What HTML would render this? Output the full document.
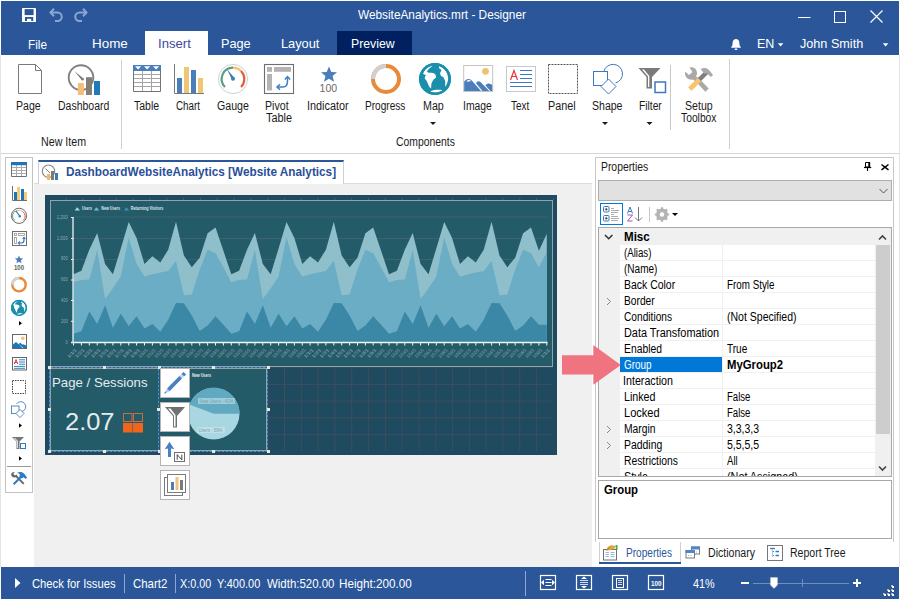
<!DOCTYPE html>
<html><head><meta charset="utf-8">
<style>
*{box-sizing:border-box}
html,body{margin:0;padding:0}
body{width:900px;height:600px;overflow:hidden;position:relative;background:#f3f3f3;font-family:"Liberation Sans",sans-serif;font-size:12px;color:#000}
.a{position:absolute}
.t{position:absolute;white-space:nowrap;line-height:0;transform-origin:0 0}
svg{position:absolute;overflow:visible}
</style></head><body>
<div class="a" style="left:0;top:0;width:900px;height:600px;background:#fdfcf7"></div><div class="a" style="left:1px;top:55px;width:898px;height:512px;background:#fff"></div>
<div class="a" style="left:1px;top:1px;width:898px;height:54px;background:#2b579a"></div>
<div class="a" style="left:1px;top:153px;width:898px;height:1px;background:#d5d5d5"></div>
<svg style="left:0;top:0" width="100" height="30">
<rect x="22" y="8" width="14" height="14" rx="1" fill="#fff"/>
<rect x="24.6" y="9.1" width="9" height="6" fill="#2b579a"/>
<rect x="25" y="17" width="8.2" height="5" fill="#2b579a"/>
<rect x="27" y="18.8" width="4.2" height="3.2" fill="#fff"/>
<rect x="22" y="21" width="14" height="1" fill="#fff"/>
<g fill="none" stroke="#8aa6d2" stroke-width="2">
<path d="M50.5 12.5 H57.5 A4.2 4.2 0 0 1 57.5 21 H55"/>
<path d="M54 8.8 L50.5 12.5 L54 16.2"/>
<path d="M86.5 12.5 H79.5 A4.2 4.2 0 0 0 79.5 21 H82"/>
<path d="M83 8.8 L86.5 12.5 L83 16.2"/>
</g>
</svg>
<svg style="left:0;top:0" width="900" height="30">
<rect x="798" y="17" width="12.5" height="1" fill="#fff"/>
<rect x="834.5" y="11.5" width="11" height="11" fill="none" stroke="#fff" stroke-width="1"/>
<path d="M870.5 10.5 L882.5 22.5 M882.5 10.5 L870.5 22.5" stroke="#fff" stroke-width="1.2"/>
</svg>
<div class="a" style="left:145px;top:31px;width:63px;height:24px;background:#fff"></div>
<div class="a" style="left:337px;top:31px;width:75px;height:24px;background:#002060"></div>
<svg style="left:0;top:0" width="900" height="60">
<path d="M736 39 C732.5 39 732.5 43 732.5 45 L731 47.8 H741 L739.5 45 C739.5 43 739.5 39 736 39Z" fill="#fff"/>
<rect x="734.6" y="48.6" width="2.8" height="1.4" rx="0.7" fill="#fff"/>
<path d="M777.8 43.2 H783.4 L780.6 46.4Z" fill="#fff"/>
<path d="M882.8 43.2 H888.4 L885.6 46.4Z" fill="#fff"/>
</svg>
<div class="a" style="left:121px;top:60px;width:1px;height:89px;background:#d0d0d0"></div>
<div class="a" style="left:729px;top:59px;width:1px;height:90px;background:#d0d0d0"></div>
<div class="a" style="left:670px;top:65px;width:1px;height:65px;background:#c8c8c8"></div>
<svg style="left:0;top:0" width="900" height="160">
<path d="M430 122 H436 L433 125Z" fill="#1a1a1a"/>
<path d="M602 122 H608 L605 125Z" fill="#1a1a1a"/>
<path d="M646.5 122 H652.5 L649.5 125Z" fill="#1a1a1a"/>
</svg>
<svg style="left:0;top:0" width="900" height="160">
<!-- page -->
<path d="M18.5 64.5 H35.5 L41.5 70.5 V93.5 H18.5Z M35.5 64.5 V70.5 H41.5" fill="#fff" stroke="#7a7a7a" stroke-width="1"/>
<!-- dashboard -->
<circle cx="81" cy="77.6" r="12.3" fill="none" stroke="#808080" stroke-width="1.9"/>
<path d="M74.2 71 L83.6 78.4 L82 80.2Z" fill="#7a7a7a"/>
<circle cx="82.6" cy="79.2" r="1.2" fill="#7a7a7a"/>
<rect x="77.9" y="83" width="6" height="12" fill="#f5bd78"/>
<rect x="86" y="77.2" width="6" height="17.8" fill="#857e77"/>
<rect x="94" y="81" width="6" height="14" fill="#1f7ab5"/>
<!-- table -->
<rect x="133" y="65" width="28" height="6" fill="#4a7ebb"/>
<path d="M135 66.2 H141.2 L138.1 69.6Z M144 66.2 H150.2 L147.1 69.6Z M153 66.2 H159.2 L156.1 69.6Z" fill="#fff"/>
<path d="M142.5 71 V91.5 M151.5 71 V91.5 M133.5 74.5 H160.5 M133.5 78.5 H160.5 M133.5 82.5 H160.5 M133.5 86.5 H160.5" fill="none" stroke="#a4a4a4" stroke-width="1"/><path d="M133.5 71 V91.5 H160.5 V71" fill="none" stroke="#747474" stroke-width="1"/>
<!-- chart -->
<path d="M174.5 64 V93.5 H204" fill="none" stroke="#777" stroke-width="1"/>
<rect x="177" y="78" width="5" height="15" fill="#4a7ebb"/>
<rect x="184" y="67" width="5" height="26" fill="#eec677"/>
<rect x="191" y="70" width="5" height="23" fill="#4a7ebb"/>
<rect x="198" y="78" width="5" height="15" fill="#eec677"/>
<!-- gauge -->
<circle cx="233" cy="79" r="14.6" fill="#fff" stroke="#d0d0d0" stroke-width="1"/>
<path d="M225 87 A11.3 11.3 0 0 1 233 67.7" fill="none" stroke="#5a9e7f" stroke-width="2.2"/>
<path d="M233 67.7 A11.3 11.3 0 0 1 241 71" fill="none" stroke="#f0c36c" stroke-width="2.2"/>
<path d="M241 71 A11.3 11.3 0 0 1 241 87" fill="none" stroke="#e05b3a" stroke-width="2.2"/>
<path d="M226.8 69 L234.2 77.6 L231.9 79.4Z" fill="#3d7bc0"/>
<circle cx="233" cy="78.8" r="2" fill="#3d7bc0"/>
<!-- pivot -->
<rect x="264.5" y="64.5" width="29" height="29" fill="#fff" stroke="#6e6e6e" stroke-width="1.1"/>
<rect x="267" y="67" width="5" height="4.8" fill="#b3b3b3"/>
<rect x="274" y="67" width="17" height="4.8" fill="#b3b3b3"/>
<rect x="267" y="74" width="5" height="16.5" fill="#b3b3b3"/>
<path d="M277.5 87 H283 C286.5 87 287.5 84 287.5 81 V77" fill="none" stroke="#3d7cc9" stroke-width="1.5"/>
<path d="M280 84.2 L277 87 L280 89.8 M284.8 79.5 L287.5 76.6 L290.2 79.5" fill="none" stroke="#3d7cc9" stroke-width="1.5"/>
<!-- indicator -->
<path d="M329 66.5 L331.3 71.9 L337 72.3 L332.6 76 L334 81.8 L329 78.7 L324 81.8 L325.4 76 L321 72.3 L326.7 71.9Z" fill="#4a7ebb"/>
<!-- progress -->
<circle cx="386" cy="79" r="13" fill="none" stroke="#e8893b" stroke-width="4"/>
<path d="M373 79 A13 13 0 0 1 386 66" fill="none" stroke="#d0d0d0" stroke-width="4"/>
<!-- globe -->
<circle cx="435" cy="79" r="15.9" fill="#1a8eab"/>
<path d="M432 65.5 A13.6 13.6 0 0 0 423 73.9 C424.2 74.2 425.2 74.5 426 75.1 C425.3 76.2 424.6 77.3 424.8 78.4 C425.4 79.3 426 80 426.6 80.8 C427.5 82.7 428.2 84.5 429 86.2 C429.6 87.2 430.4 88 431.1 88.6 C431.3 87 431.2 85.3 431.4 83.8 C432 82.2 432.7 80.8 433.5 79.6 C434.4 78.7 435.5 78 436.2 77.2 C436 76 435.6 74.8 435 73.9 C434 73.3 433 72.9 432 72.7 C430.6 72.5 429.2 72.6 427.8 72.4 C427.4 72 427 71.6 426.9 71.2 C427.6 70.4 428.3 69.6 429 68.8 C430.2 67.8 431.4 66.8 432.6 65.8Z" fill="#fff"/>
<path d="M438.9 66.1 A13.6 13.6 0 0 1 448.3 78.4 C448 80.8 447.3 83 446.4 85 C446 85.6 445.6 86.2 445.2 86.8 C445.2 84.8 445.3 82.8 445.2 80.8 C444.6 79.6 444 78.4 443.4 77.2 C442.6 76.8 441.8 76.4 441 76 C440.5 75 440.2 74 440.1 73 C440.5 72 441.1 71 441.6 70 C440.8 69.4 440 68.8 439.2 68.2 C439 67.5 438.9 66.8 438.9 66.1Z" fill="#fff"/>
<ellipse cx="436.5" cy="91.1" rx="5.8" ry="1.3" transform="rotate(-6 436.5 91.1)" fill="#fff"/>
<circle cx="435" cy="79" r="14.8" fill="none" stroke="#1a8eab" stroke-width="2.4"/>
<!-- image -->
<rect x="463.7" y="65.5" width="29" height="26" fill="#fff" stroke="#c4c4c4" stroke-width="1"/>
<circle cx="485.5" cy="71.3" r="3.4" fill="#ecc46f"/>
<path d="M464.2 91 V81.5 C466 79.5 467.5 79 468.8 79 C470 79 471 79.7 472 80.8 L481 91Z" fill="#4a7ebb"/>
<path d="M476 83.2 C476.5 82 477.5 81.2 478.5 81.2 C479.5 81.2 480.3 81.8 481 82.5 L489.3 91 H482.4Z" fill="#4a7ebb"/>
<path d="M485.5 85.5 C486.2 84.2 487.3 83.5 488.3 83.5 C489.5 83.5 491 84 492.2 85 V91 H490.4Z" fill="#4a7ebb"/>
<path d="M466 81.6 L467.6 80.2 L469.6 79.8 L471 80.9 L470.2 81.6 L469.2 81.1 L468.2 82 L467.1 81.3Z" fill="#fff"/>
<!-- text -->
<rect x="506.5" y="66.5" width="29" height="25" fill="#fff" stroke="#c8c8c8" stroke-width="1"/>
<path d="M510.5 80 L514 70.5 L517.5 80 M511.8 76.5 H516.2" fill="none" stroke="#e8383b" stroke-width="1.2"/>
<path d="M520 70.5 H532 M520 74.5 H532 M520 78.5 H532 M510 82.5 H532 M510 86.5 H532" stroke="#3c78c0" stroke-width="1"/>
<!-- panel -->
<rect x="548.5" y="64.5" width="29" height="29" fill="none" stroke="#555" stroke-width="1" stroke-dasharray="2 1"/>
<!-- shape -->
<path d="M603.8 71.5 A9.5 9.5 0 1 1 615.5 83" fill="none" stroke="#3e78c0" stroke-width="1"/>
<rect x="593.5" y="71.5" width="14" height="14" fill="#fff" stroke="#3e78c0" stroke-width="1"/>
<path d="M608.5 79 L616 86.5 L608.5 94 L601 86.5Z" fill="#fff" stroke="#3e78c0" stroke-width="1"/>
<!-- filter -->
<path d="M638.5 68 H660.5 L652 77 V88.5 H646.5 V77Z" fill="#7a7a7a"/>
<path d="M642 69.5 L648 76.5 V87 H649.3 V76 L644 69.5Z" fill="#fff"/>
<rect x="655" y="82" width="10.5" height="10.5" fill="#fff" stroke="#3e78c0" stroke-width="1.5"/>
<!-- tools -->
<path d="M697.5 80 L705.5 88.5" stroke="#a9a9a9" stroke-width="4.5" stroke-linecap="square"/>
<path d="M689.5 67.5 C693.5 66.5 697 69 697 73 C697 74.5 696.5 75.5 696 76.5 L699 79.5 L696 82 L693 79.5 C689 80.5 685 77.5 685 73.5 C685 72.8 685.2 72.3 685.4 71.8 L689 75 L692.5 72 Z" fill="#a9a9a9"/>
<path d="M698 81 L707 72" stroke="#7f7f7f" stroke-width="4.5"/>
<path d="M689.8 89.2 L699.5 79.5" stroke="#f9c46b" stroke-width="4.8"/>
<path d="M700.5 69.5 C703 67.5 706 67.5 709 70 L713 75 L711 77 L707 73.5 L704 73.5 C703 71.5 702 70.5 700.5 69.5Z" fill="#a9a9a9"/>
</svg>
<div class="a" style="left:0;top:55px;width:1px;height:512px;background:#e4e4e4"></div><div class="a" style="left:899px;top:55px;width:1px;height:512px;background:#e4e4e4"></div>
<div class="a" style="left:5px;top:157px;width:28px;height:336px;border:1px solid #c2c2c2;background:#fff"></div>
<div class="a" style="left:7px;top:466px;width:24px;height:1px;background:#9a9a9a"></div>
<svg style="left:0;top:0" width="40" height="500">
<!-- table -->
<rect x="11" y="162" width="16" height="3.2" fill="#1b75bb"/>
<path d="M11.5 167.5 H26.5 M11.5 170.5 H26.5 M11.5 173.5 H26.5 M16.5 165 V176.5 M21.5 165 V176.5" fill="none" stroke="#ababab" stroke-width="1"/><path d="M11.5 165 V176.5 H26.5 V165" fill="none" stroke="#707070" stroke-width="1"/>
<!-- chart -->
<path d="M12.5 186 V200.5 H27" fill="none" stroke="#6e6e6e" stroke-width="1"/>
<rect x="14" y="192" width="3" height="8" fill="#1b75bb"/>
<rect x="17" y="187" width="3" height="13" fill="#f9c97a"/>
<rect x="21" y="189" width="3" height="11" fill="#1b75bb"/>
<rect x="24" y="192" width="3" height="8" fill="#f9c97a"/>
<!-- gauge -->
<circle cx="19" cy="215.8" r="7.6" fill="none" stroke="#6a6a6a" stroke-width="1"/>
<path d="M14.8 220.5 A5.6 5.6 0 0 1 17.5 210.4" fill="none" stroke="#5b9e80" stroke-width="1"/>
<path d="M17.5 210.4 A5.6 5.6 0 0 1 22.6 211.5" fill="none" stroke="#f0c36c" stroke-width="1"/>
<path d="M22.6 211.5 A5.6 5.6 0 0 1 23.2 220.5" fill="none" stroke="#e05b3a" stroke-width="1"/>
<path d="M16 211 L20 216.5" stroke="#2d7bc4" stroke-width="1.2"/>
<circle cx="19.8" cy="216.2" r="1.2" fill="#2d7bc4"/>
<!-- pivot -->
<rect x="12.5" y="231.5" width="14" height="14" fill="#fff" stroke="#6e6e6e" stroke-width="1"/>
<rect x="14.5" y="233.5" width="2" height="2" fill="none" stroke="#999" stroke-width="0.8"/>
<rect x="18.5" y="233.5" width="6" height="2" fill="none" stroke="#999" stroke-width="0.8"/>
<rect x="14.5" y="237.5" width="2" height="6" fill="none" stroke="#999" stroke-width="0.8"/>
<path d="M18.5 243 H21.5 C23 243 24 242 24 240 V237.5" fill="none" stroke="#2d7bc4" stroke-width="1.2"/>
<path d="M20 241.5 L18.3 243 L20 244.5 M22.5 239 L24 237.3 L25.5 239" fill="none" stroke="#2d7bc4" stroke-width="1.1"/>
<!-- star -->
<path d="M19 255.5 L20.2 258.3 L23.2 258.5 L20.9 260.4 L21.6 263.3 L19 261.7 L16.4 263.3 L17.1 260.4 L14.8 258.5 L17.8 258.3Z" fill="#4a7ebb"/>
<!-- progress -->
<circle cx="19" cy="284.7" r="6.7" fill="none" stroke="#e8893b" stroke-width="2.4"/>
<path d="M12.3 284.7 A6.7 6.7 0 0 1 19 278" fill="none" stroke="#d4d4d4" stroke-width="2.4"/>
<!-- globe -->
<g transform="translate(19 307.9) scale(0.503) translate(-435 -79)"><circle cx="435" cy="79" r="15.9" fill="#1a8eab"/>
<path d="M432 65.5 A13.6 13.6 0 0 0 423 73.9 C424.2 74.2 425.2 74.5 426 75.1 C425.3 76.2 424.6 77.3 424.8 78.4 C425.4 79.3 426 80 426.6 80.8 C427.5 82.7 428.2 84.5 429 86.2 C429.6 87.2 430.4 88 431.1 88.6 C431.3 87 431.2 85.3 431.4 83.8 C432 82.2 432.7 80.8 433.5 79.6 C434.4 78.7 435.5 78 436.2 77.2 C436 76 435.6 74.8 435 73.9 C434 73.3 433 72.9 432 72.7 C430.6 72.5 429.2 72.6 427.8 72.4 C427.4 72 427 71.6 426.9 71.2 C427.6 70.4 428.3 69.6 429 68.8 C430.2 67.8 431.4 66.8 432.6 65.8Z" fill="#fff"/>
<path d="M438.9 66.1 A13.6 13.6 0 0 1 448.3 78.4 C448 80.8 447.3 83 446.4 85 C446 85.6 445.6 86.2 445.2 86.8 C445.2 84.8 445.3 82.8 445.2 80.8 C444.6 79.6 444 78.4 443.4 77.2 C442.6 76.8 441.8 76.4 441 76 C440.5 75 440.2 74 440.1 73 C440.5 72 441.1 71 441.6 70 C440.8 69.4 440 68.8 439.2 68.2 C439 67.5 438.9 66.8 438.9 66.1Z" fill="#fff"/>
<ellipse cx="436.5" cy="91.1" rx="5.8" ry="1.3" transform="rotate(-6 436.5 91.1)" fill="#fff"/>
<circle cx="435" cy="79" r="14.8" fill="none" stroke="#1a8eab" stroke-width="2.4"/>
</g>
<!-- arrows -->
<path d="M19 321 L22 323.3 L19 325.6Z M19 423.2 L22 425.5 L19 427.8Z M19 456.2 L22 458.5 L19 460.8Z" fill="#000"/>
<!-- image -->
<rect x="12.5" y="334.5" width="14" height="14" fill="#fff" stroke="#666" stroke-width="1"/>
<circle cx="22.8" cy="338.2" r="1.8" fill="#f5c06e"/>
<path d="M13 348 V344.5 L16 342 L20 345.5 L22.5 348Z M18.5 344 L20.5 342.8 L25.5 348 H23.5Z M22 345 L23.5 344.3 L26 345.5 V348 H25Z" fill="#1b75bb"/>
<!-- text -->
<rect x="12.5" y="357.5" width="14" height="12.5" fill="#fff" stroke="#666" stroke-width="1"/>
<path d="M14.3 364 L16 359.5 L17.7 364 M14.9 362.5 H17.1" fill="none" stroke="#e8383b" stroke-width="1"/>
<path d="M19 359.8 H25 M19 362 H25 M19 364.2 H25 M14 366.4 H25 M14 368.3 H25" stroke="#1b75bb" stroke-width="0.9"/>
<!-- panel -->
<rect x="12.5" y="380.5" width="13" height="13" fill="none" stroke="#444" stroke-width="1" stroke-dasharray="1.5 1"/>
<!-- shape -->
<path d="M16.5 404 A5 5 0 1 1 22 411.5" fill="none" stroke="#4a7ebb" stroke-width="0.9"/>
<rect x="11.5" y="406" width="7.5" height="7.5" fill="#fff" stroke="#4a7ebb" stroke-width="0.9"/>
<path d="M20 409.5 L24 413.5 L20 417.5 L16 413.5Z" fill="#fff" stroke="#4a7ebb" stroke-width="0.9"/>
<!-- filter -->
<path d="M12 437 H24 L19.5 441.5 V449 H16.5 V441.5Z" fill="#777"/>
<path d="M14 438 L17.3 441.5 V448 H18 V441 L15 438Z" fill="#fff"/>
<rect x="20.5" y="443.5" width="5" height="5" fill="#fff" stroke="#2d7bc4" stroke-width="1"/>
<!-- tools -->
<path d="M15.5 475.5 L23.8 483.8" stroke="#666" stroke-width="1.8"/>
<path d="M11.2 474.2 C11.5 472.5 13.2 471.6 14.8 472 L13.4 473.6 L14.2 475 L15.8 475.6 L17.2 474.2 C17.4 476 16 477.6 14.2 477.4 C12.4 477.2 11 476 11.2 474.2Z" fill="#666"/>
<path d="M13.6 484.2 L21.8 476" stroke="#2d7bc4" stroke-width="2"/>
<path d="M17.2 472.8 C19.5 471.5 22.5 471.8 24.3 473.8 L27 477.6 L25.8 479 L23.6 477.2 L21.6 478.6 L19.2 476.2 L20 474.6 C19.2 473.8 18.3 473.3 17.2 472.8Z" fill="#2d7bc4"/>
</svg>
<svg style="left:0;top:0" width="40" height="300"><text x="14" y="269.8" font-size="7.6" font-weight="bold" fill="#5e5e5e" textLength="10" lengthAdjust="spacingAndGlyphs" font-family="Liberation Sans">100</text></svg>
<div class="a" style="left:34px;top:183px;width:558px;height:384px;background:#f0f0f0;border-top:1px solid #dcdcdc"></div>
<div class="a" style="left:38px;top:160px;width:306px;height:24px;background:#fff;border-left:1px solid #d0d0d0;border-right:1px solid #d0d0d0;border-top:2px solid #2b579a"></div>
<svg style="left:0;top:0" width="70" height="190">
<circle cx="48.5" cy="171.2" r="6.2" fill="none" stroke="#858585" stroke-width="1.1"/>
<path d="M45.5 168.5 L50 173" stroke="#6d6d6d" stroke-width="0.9"/>
<rect x="47" y="174" width="3" height="6" fill="#eeba6c"/>
<rect x="51" y="171" width="3" height="9" fill="#7e7a76"/>
<rect x="55" y="173" width="3" height="7" fill="#3f7ab8"/>
</svg>
<div class="a" style="left:45px;top:195px;width:512px;height:260px;background:#1f4a5f"></div>
<svg style="left:0;top:0" width="600" height="470"><path d="M66.0 200.5 V451.5 M82.8 200.5 V451.5 M99.6 200.5 V451.5 M116.4 200.5 V451.5 M133.2 200.5 V451.5 M150.0 200.5 V451.5 M166.8 200.5 V451.5 M183.6 200.5 V451.5 M200.4 200.5 V451.5 M217.3 200.5 V451.5 M234.1 200.5 V451.5 M250.9 200.5 V451.5 M267.7 200.5 V451.5 M284.5 200.5 V451.5 M301.3 200.5 V451.5 M318.1 200.5 V451.5 M334.9 200.5 V451.5 M351.7 200.5 V451.5 M368.6 200.5 V451.5 M385.4 200.5 V451.5 M402.2 200.5 V451.5 M419.0 200.5 V451.5 M435.8 200.5 V451.5 M452.6 200.5 V451.5 M469.4 200.5 V451.5 M486.2 200.5 V451.5 M503.0 200.5 V451.5 M519.8 200.5 V451.5 M536.6 200.5 V451.5 M50.5 201.0 H552.5 M50.5 217.7 H552.5 M50.5 234.4 H552.5 M50.5 251.0 H552.5 M50.5 267.7 H552.5 M50.5 284.4 H552.5 M50.5 301.0 H552.5 M50.5 317.7 H552.5 M50.5 334.4 H552.5 M50.5 351.1 H552.5 M50.5 367.7 H552.5 M50.5 384.4 H552.5 M50.5 401.1 H552.5 M50.5 417.7 H552.5 M50.5 434.4 H552.5" stroke="#3b4f5e" stroke-width="1"/></svg>
<div class="a" style="left:50px;top:200px;width:503px;height:167px;background:#245b69;border:1px solid #8fa3ab"></div>
<svg style="left:0;top:0" width="600" height="470"><path d="M66.0 198.5 V199.5 M82.8 198.5 V199.5 M99.6 198.5 V199.5 M116.4 198.5 V199.5 M133.2 198.5 V199.5 M150.0 198.5 V199.5 M166.8 198.5 V199.5 M183.6 198.5 V199.5 M200.4 198.5 V199.5 M217.3 198.5 V199.5 M234.1 198.5 V199.5 M250.9 198.5 V199.5 M267.7 198.5 V199.5 M284.5 198.5 V199.5 M301.3 198.5 V199.5 M318.1 198.5 V199.5 M334.9 198.5 V199.5 M351.7 198.5 V199.5 M368.6 198.5 V199.5 M385.4 198.5 V199.5 M402.2 198.5 V199.5 M419.0 198.5 V199.5 M435.8 198.5 V199.5 M452.6 198.5 V199.5 M469.4 198.5 V199.5 M486.2 198.5 V199.5 M503.0 198.5 V199.5 M519.8 198.5 V199.5 M536.6 198.5 V199.5 M553.5 198.5 V199.5" stroke="#7a6a6a" stroke-width="1.2"/></svg>
<svg style="left:0;top:0" width="600" height="470"><path d="M74 217 H547" stroke="#3d6270" stroke-width="1"/><path d="M74 238.5 H547" stroke="#3d6270" stroke-width="1"/><path d="M74 259.5 H547" stroke="#3d6270" stroke-width="1"/><path d="M74 280 H547" stroke="#3d6270" stroke-width="1"/><path d="M74 300.5 H547" stroke="#3d6270" stroke-width="1"/><path d="M74 321.3 H547" stroke="#3d6270" stroke-width="1"/><path d="M73.5 342 L73.5 274.2 L81.4 270.7 L89.3 249.7 L97.2 232.9 L105.1 264.1 L112.9 274.2 L120.8 248.5 L128.7 222.1 L136.6 238.0 L144.5 264.1 L152.4 256.2 L160.3 262.5 L168.2 249.7 L176.0 221.7 L183.9 255.5 L191.8 267.2 L199.7 257.8 L207.6 233.3 L215.5 227.5 L223.4 250.8 L231.3 274.2 L239.1 270.7 L247.0 249.7 L254.9 232.9 L262.8 264.1 L270.7 274.2 L278.6 248.5 L286.5 222.1 L294.4 238.0 L302.3 264.1 L310.1 256.2 L318.0 262.5 L325.9 249.7 L333.8 221.7 L341.7 255.5 L349.6 267.2 L357.5 257.8 L365.4 233.3 L373.2 227.5 L381.1 250.8 L389.0 274.2 L396.9 270.7 L404.8 249.7 L412.7 232.9 L420.6 264.1 L428.5 274.2 L436.3 248.5 L444.2 222.1 L452.1 238.0 L460.0 264.1 L467.9 256.2 L475.8 262.5 L483.7 249.7 L491.6 221.7 L499.5 255.5 L507.3 267.2 L515.2 257.8 L523.1 233.3 L531.0 227.5 L538.9 250.8 L546.8 233.8 L546.8 342Z" fill="#8fbfcb"/><path d="M73.5 342 L73.5 282.3 L81.4 280.0 L89.3 279.5 L97.2 250.1 L105.1 299.1 L112.9 288.2 L120.8 276.5 L128.7 237.5 L136.6 264.1 L144.5 276.5 L152.4 274.2 L160.3 272.5 L168.2 271.1 L176.0 260.9 L183.9 295.2 L191.8 294.5 L199.7 269.5 L207.6 249.7 L215.5 253.2 L223.4 267.2 L231.3 282.3 L239.1 280.0 L247.0 279.5 L254.9 250.1 L262.8 299.1 L270.7 288.2 L278.6 276.5 L286.5 237.5 L294.4 264.1 L302.3 276.5 L310.1 274.2 L318.0 272.5 L325.9 271.1 L333.8 260.9 L341.7 295.2 L349.6 294.5 L357.5 269.5 L365.4 249.7 L373.2 253.2 L381.1 267.2 L389.0 282.3 L396.9 280.0 L404.8 279.5 L412.7 250.1 L420.6 299.1 L428.5 288.2 L436.3 276.5 L444.2 237.5 L452.1 264.1 L460.0 276.5 L467.9 274.2 L475.8 272.5 L483.7 271.1 L491.6 260.9 L499.5 295.2 L507.3 294.5 L515.2 269.5 L523.1 249.7 L531.0 253.2 L538.9 267.2 L546.8 252.0 L546.8 342Z" fill="#6aadc4"/><path d="M73.5 342 L73.5 333.7 L81.4 331.3 L89.3 311.5 L97.2 323.9 L105.1 305.2 L112.9 327.8 L120.8 313.8 L128.7 326.2 L136.6 316.2 L144.5 328.5 L152.4 323.9 L160.3 331.8 L168.2 319.7 L176.0 302.9 L183.9 303.3 L191.8 315.5 L199.7 330.9 L207.6 325.5 L215.5 316.2 L223.4 324.8 L231.3 333.7 L239.1 331.3 L247.0 311.5 L254.9 323.9 L262.8 305.2 L270.7 327.8 L278.6 313.8 L286.5 326.2 L294.4 316.2 L302.3 328.5 L310.1 323.9 L318.0 331.8 L325.9 319.7 L333.8 302.9 L341.7 303.3 L349.6 315.5 L357.5 330.9 L365.4 325.5 L373.2 316.2 L381.1 324.8 L389.0 333.7 L396.9 331.3 L404.8 311.5 L412.7 323.9 L420.6 305.2 L428.5 327.8 L436.3 313.8 L444.2 326.2 L452.1 316.2 L460.0 328.5 L467.9 323.9 L475.8 331.8 L483.7 319.7 L491.6 302.9 L499.5 303.3 L507.3 315.5 L515.2 330.9 L523.1 325.5 L531.0 316.2 L538.9 324.8 L546.8 324.8 L546.8 342Z" fill="#3a87a6"/><path d="M73 217 V343" fill="none" stroke="#eef3f4" stroke-width="1.3"/><path d="M71 342.5 H547.5" fill="none" stroke="#eef3f4" stroke-width="1.6"/><path d="M73.5 342 V345.5 M81.4 342 V345.5 M89.3 342 V345.5 M97.2 342 V345.5 M105.1 342 V345.5 M112.9 342 V345.5 M120.8 342 V345.5 M128.7 342 V345.5 M136.6 342 V345.5 M144.5 342 V345.5 M152.4 342 V345.5 M160.3 342 V345.5 M168.2 342 V345.5 M176.0 342 V345.5 M183.9 342 V345.5 M191.8 342 V345.5 M199.7 342 V345.5 M207.6 342 V345.5 M215.5 342 V345.5 M223.4 342 V345.5 M231.3 342 V345.5 M239.1 342 V345.5 M247.0 342 V345.5 M254.9 342 V345.5 M262.8 342 V345.5 M270.7 342 V345.5 M278.6 342 V345.5 M286.5 342 V345.5 M294.4 342 V345.5 M302.3 342 V345.5 M310.1 342 V345.5 M318.0 342 V345.5 M325.9 342 V345.5 M333.8 342 V345.5 M341.7 342 V345.5 M349.6 342 V345.5 M357.5 342 V345.5 M365.4 342 V345.5 M373.2 342 V345.5 M381.1 342 V345.5 M389.0 342 V345.5 M396.9 342 V345.5 M404.8 342 V345.5 M412.7 342 V345.5 M420.6 342 V345.5 M428.5 342 V345.5 M436.3 342 V345.5 M444.2 342 V345.5 M452.1 342 V345.5 M460.0 342 V345.5 M467.9 342 V345.5 M475.8 342 V345.5 M483.7 342 V345.5 M491.6 342 V345.5 M499.5 342 V345.5 M507.3 342 V345.5 M515.2 342 V345.5 M523.1 342 V345.5 M531.0 342 V345.5 M538.9 342 V345.5 M546.8 342 V345.5" stroke="#eef3f4" stroke-width="1"/><path d="M71 217.5 H73.5 M71 238.5 H73.5 M71 259.5 H73.5 M71 280 H73.5 M71 300.5 H73.5 M71 321.3 H73.5" stroke="#eef3f4" stroke-width="1"/><text x="0" y="0" transform="translate(77.0 350.5) rotate(-45)" text-anchor="end" font-size="4.6" fill="#95adb4" textLength="11" lengthAdjust="spacingAndGlyphs" font-family="Liberation Sans">1/1/1</text><text x="0" y="0" transform="translate(84.9 350.5) rotate(-45)" text-anchor="end" font-size="4.6" fill="#95adb4" textLength="11" lengthAdjust="spacingAndGlyphs" font-family="Liberation Sans">1/2/1</text><text x="0" y="0" transform="translate(92.8 350.5) rotate(-45)" text-anchor="end" font-size="4.6" fill="#95adb4" textLength="11" lengthAdjust="spacingAndGlyphs" font-family="Liberation Sans">1/3/1</text><text x="0" y="0" transform="translate(100.7 350.5) rotate(-45)" text-anchor="end" font-size="4.6" fill="#95adb4" textLength="11" lengthAdjust="spacingAndGlyphs" font-family="Liberation Sans">1/4/1</text><text x="0" y="0" transform="translate(108.6 350.5) rotate(-45)" text-anchor="end" font-size="4.6" fill="#95adb4" textLength="11" lengthAdjust="spacingAndGlyphs" font-family="Liberation Sans">1/5/1</text><text x="0" y="0" transform="translate(116.4 350.5) rotate(-45)" text-anchor="end" font-size="4.6" fill="#95adb4" textLength="11" lengthAdjust="spacingAndGlyphs" font-family="Liberation Sans">1/6/1</text><text x="0" y="0" transform="translate(124.3 350.5) rotate(-45)" text-anchor="end" font-size="4.6" fill="#95adb4" textLength="11" lengthAdjust="spacingAndGlyphs" font-family="Liberation Sans">1/7/1</text><text x="0" y="0" transform="translate(132.2 350.5) rotate(-45)" text-anchor="end" font-size="4.6" fill="#95adb4" textLength="11" lengthAdjust="spacingAndGlyphs" font-family="Liberation Sans">1/8/1</text><text x="0" y="0" transform="translate(140.1 350.5) rotate(-45)" text-anchor="end" font-size="4.6" fill="#95adb4" textLength="11" lengthAdjust="spacingAndGlyphs" font-family="Liberation Sans">1/9/1</text><text x="0" y="0" transform="translate(148.0 350.5) rotate(-45)" text-anchor="end" font-size="4.6" fill="#95adb4" textLength="11" lengthAdjust="spacingAndGlyphs" font-family="Liberation Sans">1/10/1</text><text x="0" y="0" transform="translate(155.9 350.5) rotate(-45)" text-anchor="end" font-size="4.6" fill="#95adb4" textLength="11" lengthAdjust="spacingAndGlyphs" font-family="Liberation Sans">1/11/1</text><text x="0" y="0" transform="translate(163.8 350.5) rotate(-45)" text-anchor="end" font-size="4.6" fill="#95adb4" textLength="11" lengthAdjust="spacingAndGlyphs" font-family="Liberation Sans">1/12/1</text><text x="0" y="0" transform="translate(171.7 350.5) rotate(-45)" text-anchor="end" font-size="4.6" fill="#95adb4" textLength="11" lengthAdjust="spacingAndGlyphs" font-family="Liberation Sans">1/13/1</text><text x="0" y="0" transform="translate(179.5 350.5) rotate(-45)" text-anchor="end" font-size="4.6" fill="#95adb4" textLength="11" lengthAdjust="spacingAndGlyphs" font-family="Liberation Sans">1/14/1</text><text x="0" y="0" transform="translate(187.4 350.5) rotate(-45)" text-anchor="end" font-size="4.6" fill="#95adb4" textLength="11" lengthAdjust="spacingAndGlyphs" font-family="Liberation Sans">1/15/1</text><text x="0" y="0" transform="translate(195.3 350.5) rotate(-45)" text-anchor="end" font-size="4.6" fill="#95adb4" textLength="11" lengthAdjust="spacingAndGlyphs" font-family="Liberation Sans">1/16/1</text><text x="0" y="0" transform="translate(203.2 350.5) rotate(-45)" text-anchor="end" font-size="4.6" fill="#95adb4" textLength="11" lengthAdjust="spacingAndGlyphs" font-family="Liberation Sans">1/17/1</text><text x="0" y="0" transform="translate(211.1 350.5) rotate(-45)" text-anchor="end" font-size="4.6" fill="#95adb4" textLength="11" lengthAdjust="spacingAndGlyphs" font-family="Liberation Sans">1/18/1</text><text x="0" y="0" transform="translate(219.0 350.5) rotate(-45)" text-anchor="end" font-size="4.6" fill="#95adb4" textLength="11" lengthAdjust="spacingAndGlyphs" font-family="Liberation Sans">1/19/1</text><text x="0" y="0" transform="translate(226.9 350.5) rotate(-45)" text-anchor="end" font-size="4.6" fill="#95adb4" textLength="11" lengthAdjust="spacingAndGlyphs" font-family="Liberation Sans">1/20/1</text><text x="0" y="0" transform="translate(234.8 350.5) rotate(-45)" text-anchor="end" font-size="4.6" fill="#95adb4" textLength="11" lengthAdjust="spacingAndGlyphs" font-family="Liberation Sans">1/21/1</text><text x="0" y="0" transform="translate(242.6 350.5) rotate(-45)" text-anchor="end" font-size="4.6" fill="#95adb4" textLength="11" lengthAdjust="spacingAndGlyphs" font-family="Liberation Sans">1/22/1</text><text x="0" y="0" transform="translate(250.5 350.5) rotate(-45)" text-anchor="end" font-size="4.6" fill="#95adb4" textLength="11" lengthAdjust="spacingAndGlyphs" font-family="Liberation Sans">1/23/1</text><text x="0" y="0" transform="translate(258.4 350.5) rotate(-45)" text-anchor="end" font-size="4.6" fill="#95adb4" textLength="11" lengthAdjust="spacingAndGlyphs" font-family="Liberation Sans">1/24/1</text><text x="0" y="0" transform="translate(266.3 350.5) rotate(-45)" text-anchor="end" font-size="4.6" fill="#95adb4" textLength="11" lengthAdjust="spacingAndGlyphs" font-family="Liberation Sans">1/25/1</text><text x="0" y="0" transform="translate(274.2 350.5) rotate(-45)" text-anchor="end" font-size="4.6" fill="#95adb4" textLength="11" lengthAdjust="spacingAndGlyphs" font-family="Liberation Sans">1/26/1</text><text x="0" y="0" transform="translate(282.1 350.5) rotate(-45)" text-anchor="end" font-size="4.6" fill="#95adb4" textLength="11" lengthAdjust="spacingAndGlyphs" font-family="Liberation Sans">1/27/1</text><text x="0" y="0" transform="translate(290.0 350.5) rotate(-45)" text-anchor="end" font-size="4.6" fill="#95adb4" textLength="11" lengthAdjust="spacingAndGlyphs" font-family="Liberation Sans">1/28/1</text><text x="0" y="0" transform="translate(297.9 350.5) rotate(-45)" text-anchor="end" font-size="4.6" fill="#95adb4" textLength="11" lengthAdjust="spacingAndGlyphs" font-family="Liberation Sans">1/29/1</text><text x="0" y="0" transform="translate(305.8 350.5) rotate(-45)" text-anchor="end" font-size="4.6" fill="#95adb4" textLength="11" lengthAdjust="spacingAndGlyphs" font-family="Liberation Sans">1/30/1</text><text x="0" y="0" transform="translate(313.6 350.5) rotate(-45)" text-anchor="end" font-size="4.6" fill="#95adb4" textLength="11" lengthAdjust="spacingAndGlyphs" font-family="Liberation Sans">1/1/1</text><text x="0" y="0" transform="translate(321.5 350.5) rotate(-45)" text-anchor="end" font-size="4.6" fill="#95adb4" textLength="11" lengthAdjust="spacingAndGlyphs" font-family="Liberation Sans">1/2/1</text><text x="0" y="0" transform="translate(329.4 350.5) rotate(-45)" text-anchor="end" font-size="4.6" fill="#95adb4" textLength="11" lengthAdjust="spacingAndGlyphs" font-family="Liberation Sans">1/3/1</text><text x="0" y="0" transform="translate(337.3 350.5) rotate(-45)" text-anchor="end" font-size="4.6" fill="#95adb4" textLength="11" lengthAdjust="spacingAndGlyphs" font-family="Liberation Sans">1/4/1</text><text x="0" y="0" transform="translate(345.2 350.5) rotate(-45)" text-anchor="end" font-size="4.6" fill="#95adb4" textLength="11" lengthAdjust="spacingAndGlyphs" font-family="Liberation Sans">1/5/1</text><text x="0" y="0" transform="translate(353.1 350.5) rotate(-45)" text-anchor="end" font-size="4.6" fill="#95adb4" textLength="11" lengthAdjust="spacingAndGlyphs" font-family="Liberation Sans">1/6/1</text><text x="0" y="0" transform="translate(361.0 350.5) rotate(-45)" text-anchor="end" font-size="4.6" fill="#95adb4" textLength="11" lengthAdjust="spacingAndGlyphs" font-family="Liberation Sans">1/7/1</text><text x="0" y="0" transform="translate(368.9 350.5) rotate(-45)" text-anchor="end" font-size="4.6" fill="#95adb4" textLength="11" lengthAdjust="spacingAndGlyphs" font-family="Liberation Sans">1/8/1</text><text x="0" y="0" transform="translate(376.7 350.5) rotate(-45)" text-anchor="end" font-size="4.6" fill="#95adb4" textLength="11" lengthAdjust="spacingAndGlyphs" font-family="Liberation Sans">1/9/1</text><text x="0" y="0" transform="translate(384.6 350.5) rotate(-45)" text-anchor="end" font-size="4.6" fill="#95adb4" textLength="11" lengthAdjust="spacingAndGlyphs" font-family="Liberation Sans">1/10/1</text><text x="0" y="0" transform="translate(392.5 350.5) rotate(-45)" text-anchor="end" font-size="4.6" fill="#95adb4" textLength="11" lengthAdjust="spacingAndGlyphs" font-family="Liberation Sans">1/11/1</text><text x="0" y="0" transform="translate(400.4 350.5) rotate(-45)" text-anchor="end" font-size="4.6" fill="#95adb4" textLength="11" lengthAdjust="spacingAndGlyphs" font-family="Liberation Sans">1/12/1</text><text x="0" y="0" transform="translate(408.3 350.5) rotate(-45)" text-anchor="end" font-size="4.6" fill="#95adb4" textLength="11" lengthAdjust="spacingAndGlyphs" font-family="Liberation Sans">1/13/1</text><text x="0" y="0" transform="translate(416.2 350.5) rotate(-45)" text-anchor="end" font-size="4.6" fill="#95adb4" textLength="11" lengthAdjust="spacingAndGlyphs" font-family="Liberation Sans">1/14/1</text><text x="0" y="0" transform="translate(424.1 350.5) rotate(-45)" text-anchor="end" font-size="4.6" fill="#95adb4" textLength="11" lengthAdjust="spacingAndGlyphs" font-family="Liberation Sans">1/15/1</text><text x="0" y="0" transform="translate(432.0 350.5) rotate(-45)" text-anchor="end" font-size="4.6" fill="#95adb4" textLength="11" lengthAdjust="spacingAndGlyphs" font-family="Liberation Sans">1/16/1</text><text x="0" y="0" transform="translate(439.8 350.5) rotate(-45)" text-anchor="end" font-size="4.6" fill="#95adb4" textLength="11" lengthAdjust="spacingAndGlyphs" font-family="Liberation Sans">1/17/1</text><text x="0" y="0" transform="translate(447.7 350.5) rotate(-45)" text-anchor="end" font-size="4.6" fill="#95adb4" textLength="11" lengthAdjust="spacingAndGlyphs" font-family="Liberation Sans">1/18/1</text><text x="0" y="0" transform="translate(455.6 350.5) rotate(-45)" text-anchor="end" font-size="4.6" fill="#95adb4" textLength="11" lengthAdjust="spacingAndGlyphs" font-family="Liberation Sans">1/19/1</text><text x="0" y="0" transform="translate(463.5 350.5) rotate(-45)" text-anchor="end" font-size="4.6" fill="#95adb4" textLength="11" lengthAdjust="spacingAndGlyphs" font-family="Liberation Sans">1/20/1</text><text x="0" y="0" transform="translate(471.4 350.5) rotate(-45)" text-anchor="end" font-size="4.6" fill="#95adb4" textLength="11" lengthAdjust="spacingAndGlyphs" font-family="Liberation Sans">1/21/1</text><text x="0" y="0" transform="translate(479.3 350.5) rotate(-45)" text-anchor="end" font-size="4.6" fill="#95adb4" textLength="11" lengthAdjust="spacingAndGlyphs" font-family="Liberation Sans">1/22/1</text><text x="0" y="0" transform="translate(487.2 350.5) rotate(-45)" text-anchor="end" font-size="4.6" fill="#95adb4" textLength="11" lengthAdjust="spacingAndGlyphs" font-family="Liberation Sans">1/23/1</text><text x="0" y="0" transform="translate(495.1 350.5) rotate(-45)" text-anchor="end" font-size="4.6" fill="#95adb4" textLength="11" lengthAdjust="spacingAndGlyphs" font-family="Liberation Sans">1/24/1</text><text x="0" y="0" transform="translate(503.0 350.5) rotate(-45)" text-anchor="end" font-size="4.6" fill="#95adb4" textLength="11" lengthAdjust="spacingAndGlyphs" font-family="Liberation Sans">1/25/1</text><text x="0" y="0" transform="translate(510.8 350.5) rotate(-45)" text-anchor="end" font-size="4.6" fill="#95adb4" textLength="11" lengthAdjust="spacingAndGlyphs" font-family="Liberation Sans">1/26/1</text><text x="0" y="0" transform="translate(518.7 350.5) rotate(-45)" text-anchor="end" font-size="4.6" fill="#95adb4" textLength="11" lengthAdjust="spacingAndGlyphs" font-family="Liberation Sans">1/27/1</text><text x="0" y="0" transform="translate(526.6 350.5) rotate(-45)" text-anchor="end" font-size="4.6" fill="#95adb4" textLength="11" lengthAdjust="spacingAndGlyphs" font-family="Liberation Sans">1/28/1</text><text x="0" y="0" transform="translate(534.5 350.5) rotate(-45)" text-anchor="end" font-size="4.6" fill="#95adb4" textLength="11" lengthAdjust="spacingAndGlyphs" font-family="Liberation Sans">1/29/1</text><text x="0" y="0" transform="translate(542.4 350.5) rotate(-45)" text-anchor="end" font-size="4.6" fill="#95adb4" textLength="11" lengthAdjust="spacingAndGlyphs" font-family="Liberation Sans">1/30/1</text><text x="0" y="0" transform="translate(550.3 350.5) rotate(-45)" text-anchor="end" font-size="4.6" fill="#95adb4" textLength="11" lengthAdjust="spacingAndGlyphs" font-family="Liberation Sans">1/1/1</text><text x="67.7" y="218.8" text-anchor="end" font-size="5" fill="#93abb3" textLength="11.0" lengthAdjust="spacingAndGlyphs" font-family="Liberation Sans">1,200</text><text x="67.7" y="239.6" text-anchor="end" font-size="5" fill="#93abb3" textLength="11.0" lengthAdjust="spacingAndGlyphs" font-family="Liberation Sans">1,000</text><text x="67.7" y="260.4" text-anchor="end" font-size="5" fill="#93abb3" textLength="6.6" lengthAdjust="spacingAndGlyphs" font-family="Liberation Sans">800</text><text x="67.7" y="281.2" text-anchor="end" font-size="5" fill="#93abb3" textLength="6.6" lengthAdjust="spacingAndGlyphs" font-family="Liberation Sans">600</text><text x="67.7" y="302" text-anchor="end" font-size="5" fill="#93abb3" textLength="6.6" lengthAdjust="spacingAndGlyphs" font-family="Liberation Sans">400</text><text x="67.7" y="322.8" text-anchor="end" font-size="5" fill="#93abb3" textLength="6.6" lengthAdjust="spacingAndGlyphs" font-family="Liberation Sans">200</text><text x="67.7" y="344" text-anchor="end" font-size="5" fill="#93abb3" textLength="2.2" lengthAdjust="spacingAndGlyphs" font-family="Liberation Sans">0</text><path d="M74.7 210.5 L76.9 207.2 L78.3 208.6 L80.0 210.5Z" fill="#a9d0da"/><path d="M94 210.5 L96.2 207.2 L97.6 208.6 L99.3 210.5Z" fill="#7ab9cc"/><path d="M124 210.5 L126.2 207.2 L127.6 208.6 L129.3 210.5Z" fill="#3f8cab"/><text x="82" y="209.6" font-size="4.8" font-weight="bold" fill="#dce8ec" textLength="10.0" lengthAdjust="spacingAndGlyphs" font-family="Liberation Sans">Users</text><text x="101.3" y="209.6" font-size="4.8" font-weight="bold" fill="#dce8ec" textLength="18.7" lengthAdjust="spacingAndGlyphs" font-family="Liberation Sans">New Users</text><text x="130.7" y="209.6" font-size="4.8" font-weight="bold" fill="#dce8ec" textLength="32.6" lengthAdjust="spacingAndGlyphs" font-family="Liberation Sans">Returning Visitors</text></svg>
<div class="a" style="left:50px;top:368px;width:109px;height:83px;background:#245b69;border:1px solid #8fa3ab"></div>
<svg style="left:0;top:0" width="600" height="470">
<rect x="123.5" y="413.5" width="8.5" height="8" fill="none" stroke="#d06a3a" stroke-width="1"/>
<rect x="133.5" y="413.5" width="9" height="8" fill="none" stroke="#d06a3a" stroke-width="1"/>
<rect x="123" y="423" width="9.5" height="9.5" fill="#f0641e"/>
<rect x="133" y="423" width="10" height="9.5" fill="#f0641e"/>
</svg>
<div class="a" style="left:158px;top:368px;width:109px;height:83px;background:#245b69;border:1px solid #8fa3ab"></div>
<svg style="left:0;top:0" width="600" height="470">
<circle cx="213.7" cy="413.7" r="25.8" fill="#a8d6e1"/>
<path d="M213.7 413.7 L189.5 404.5 A25.8 25.8 0 0 1 239.5 413.7Z" fill="#60a9c1"/>
<rect x="198" y="398" width="37" height="6" fill="#b5dde6" opacity="0.7"/>
<rect x="197" y="427" width="28" height="6" fill="#c8e6ec" opacity="0.7"/>
<text x="199.5" y="403" font-size="5" fill="#7d9ea8" textLength="34" lengthAdjust="spacingAndGlyphs" font-family="Liberation Sans">New Users - 41%</text>
<text x="198.5" y="432" font-size="5" fill="#7d9ea8" textLength="24" lengthAdjust="spacingAndGlyphs" font-family="Liberation Sans">Users - 59%</text>
<text x="192" y="377" font-size="4.8" fill="#e6eef0" textLength="19" lengthAdjust="spacingAndGlyphs" font-family="Liberation Sans" font-weight="bold">New Users</text>
</svg>
<svg style="left:0;top:0" width="600" height="470">
<rect x="49.5" y="367.5" width="218" height="84" fill="none" stroke="#4a8fd0" stroke-width="1"/>
<rect x="49.5" y="367.5" width="218" height="84" fill="none" stroke="#2a3440" stroke-width="1" stroke-dasharray="1 3"/>
<path d="M158.5 367.5 V451.5" stroke="#4a8fd0" stroke-width="1"/><path d="M158.5 367.5 V451.5" stroke="#2a3440" stroke-width="1" stroke-dasharray="1 3"/>
<g fill="#e8e8e2"><rect x="157" y="408" width="3" height="3"/><rect x="48" y="366" width="3" height="3"/><rect x="48" y="450" width="3" height="3"/><rect x="103" y="366" width="3" height="3"/><rect x="103" y="450" width="3" height="3"/><rect x="158" y="366" width="3" height="3"/><rect x="158" y="450" width="3" height="3"/><rect x="212" y="366" width="3" height="3"/><rect x="212" y="450" width="3" height="3"/><rect x="267" y="366" width="3" height="3"/><rect x="267" y="450" width="3" height="3"/><rect x="48" y="408" width="3" height="3"/><rect x="267" y="408" width="3" height="3"/></g>
</svg>
<svg style="left:0;top:0" width="600" height="520">
<g fill="#fff" stroke="#b4b4b4" stroke-width="1">
<rect x="160.5" y="368.5" width="29" height="29"/>
<rect x="160.5" y="402.5" width="29" height="29"/>
<rect x="160.5" y="436.5" width="29" height="29"/>
<rect x="160.5" y="470.5" width="29" height="29"/>
</g>
<!-- pencil -->
<path d="M183.5 372 L186.2 374.5 L184 376.6 L181.4 374Z" fill="#4a80c0"/>
<path d="M181.4 374 L184 376.6 L182 378.6 L179.4 376Z" fill="#c4d5ea"/>
<path d="M179.4 376 L182 378.6 L169.6 391.2 L167 388.6Z" fill="#4a80c0"/>
<path d="M167 388.6 L169.6 391.2 L164.2 393.8Z" fill="#b4c9e3"/>
<path d="M165.2 391.6 L166.4 392.8 L164.2 393.8Z" fill="#4a80c0"/>
<!-- filter -->
<path d="M165 407 H185 L177 416 V427.5 H173 V416Z" fill="#707070"/>
<path d="M168 408.5 L174 415.5 V426.5 H175.5 V415 L170.5 408.5Z" fill="#fff"/>
<!-- up N -->
<path d="M169.5 441.8 L174.3 449.2 L171 448.6 V457 H168 V448.6 L164.7 449.2Z" fill="#4a80c0"/>
<rect x="174.5" y="452.5" width="10" height="9" fill="#fff" stroke="#6e6e6e" stroke-width="1"/>
<path d="M177.2 459.8 V454.6 L181.8 459.8 V454.6" fill="none" stroke="#333" stroke-width="0.9"/>
<!-- report -->
<rect x="164.5" y="477.5" width="18" height="18" fill="#fff" stroke="#7a7a7a" stroke-width="1"/>
<rect x="167.5" y="474.5" width="18" height="18" fill="#fff" stroke="#7a7a7a" stroke-width="1"/>
<rect x="171" y="482" width="3" height="8" fill="#4a7ebb"/>
<rect x="175.5" y="477" width="3" height="13" fill="#eec677"/>
<rect x="180" y="480" width="3" height="10" fill="#7a7a7a"/>
</svg>
<div class="a" style="left:595px;top:157px;width:299px;height:385px;border:1px solid #c8c8c8;border-bottom:none"></div>
<svg style="left:0;top:0" width="900" height="600">
<path d="M865.5 162.5 H869.5 V167 H865.5Z" fill="none" stroke="#000" stroke-width="1"/>
<rect x="868.3" y="162" width="1.9" height="5.5" fill="#000"/>
<path d="M864 167.5 H871.2" stroke="#000" stroke-width="1.2"/>
<path d="M867.5 168 V171" stroke="#000" stroke-width="1.1"/>
<path d="M881.5 164.5 L888.5 169.8 M888.5 164.5 L881.5 169.8" fill="none" stroke="#000" stroke-width="1.5"/>
<rect x="598.5" y="180.5" width="293" height="20" fill="#e1e1e1" stroke="#adadad" stroke-width="1"/>
<path d="M879.5 189 L883.5 193 L887.5 189" fill="none" stroke="#555" stroke-width="1"/>
<rect x="600.5" y="203.5" width="22" height="21" fill="#fff" stroke="#0078d7" stroke-width="1"/>
<rect x="603.5" y="206.5" width="5.5" height="5.5" rx="1" fill="none" stroke="#3c78c0" stroke-width="1"/>
<rect x="603.5" y="215.5" width="5.5" height="5.5" rx="1" fill="none" stroke="#3c78c0" stroke-width="1"/>
<path d="M606.2 207.8 V210.8 M604.8 209.3 H607.7 M606.2 216.8 V219.8 M604.8 218.3 H607.7" stroke="#333" stroke-width="0.8"/>
<path d="M611 208.5 H614 M611 210.5 H618 M611 212.5 H618 M615.5 210.5 H619 M611 214.5 H614 M611 216.5 H618 M611 218.5 H619 M611 220.5 H618" stroke="#999" stroke-width="0.8"/>
<path d="M627.5 213.5 L630 207 L632.5 213.5 M628.4 211.5 H631.6" fill="none" stroke="#3c78c0" stroke-width="1"/>
<path d="M627.5 215 H632.5 L627.5 221 H632.5" fill="none" stroke="#9b59b6" stroke-width="1"/>
<path d="M638.5 207 V221 M635 217.5 L638.5 221 L642 217.5" fill="none" stroke="#777" stroke-width="1"/>
<rect x="649" y="207" width="1" height="15" fill="#c8c8c8"/>
<circle cx="662" cy="214.5" r="4.6" fill="none" stroke="#b3b3b3" stroke-width="2.8"/>
<path d="M662 207.3 V221.7 M654.8 214.5 H669.2 M656.9 209.4 L667.1 219.6 M667.1 209.4 L656.9 219.6" stroke="#b3b3b3" stroke-width="2.2"/>
<circle cx="662" cy="214.5" r="2.2" fill="#fff"/>
<path d="M672 213 H678 L675 216Z" fill="#000"/>
</svg>
<div class="a" style="left:598px;top:227px;width:294px;height:250px;border:1px solid #a8a8a8;background:#fff;overflow:hidden"></div>
<div class="a" style="left:599px;top:228px;width:21px;height:248px;background:#f0f0f0"></div>
<div class="a" style="left:599px;top:228px;width:276px;height:17px;background:#f0f0f0"></div>
<div class="a" style="left:620px;top:260px;width:255px;height:1px;background:#f0f0f0"></div><div class="a" style="left:620px;top:276px;width:255px;height:1px;background:#f0f0f0"></div><div class="a" style="left:620px;top:292px;width:255px;height:1px;background:#f0f0f0"></div><div class="a" style="left:620px;top:308px;width:255px;height:1px;background:#f0f0f0"></div><div class="a" style="left:620px;top:324px;width:255px;height:1px;background:#f0f0f0"></div><div class="a" style="left:620px;top:340px;width:255px;height:1px;background:#f0f0f0"></div><div class="a" style="left:620px;top:356px;width:255px;height:1px;background:#f0f0f0"></div><div class="a" style="left:620px;top:372px;width:255px;height:1px;background:#f0f0f0"></div><div class="a" style="left:620px;top:388px;width:255px;height:1px;background:#f0f0f0"></div><div class="a" style="left:620px;top:404px;width:255px;height:1px;background:#f0f0f0"></div><div class="a" style="left:620px;top:420px;width:255px;height:1px;background:#f0f0f0"></div><div class="a" style="left:620px;top:436px;width:255px;height:1px;background:#f0f0f0"></div><div class="a" style="left:620px;top:452px;width:255px;height:1px;background:#f0f0f0"></div><div class="a" style="left:620px;top:468px;width:255px;height:1px;background:#f0f0f0"></div>
<div class="a" style="left:722px;top:245px;width:1px;height:231px;background:#f0f0f0"></div>
<div class="a" style="left:620px;top:357px;width:102px;height:15px;background:#0078d7"></div>
<div class="a" style="left:875px;top:228px;width:16px;height:248px;background:#f0f0f0"></div>
<div class="a" style="left:876px;top:245px;width:14px;height:189px;background:#cdcdcd"></div>
<svg style="left:0;top:0" width="900" height="600">
<path d="M879 239.5 L882.5 236 L886 239.5" fill="none" stroke="#444" stroke-width="1.6"/>
<path d="M879 466.5 L882.5 470 L886 466.5" fill="none" stroke="#444" stroke-width="1.6"/>
<path d="M605 235 L608.7 238.7 L612.4 235" fill="none" stroke="#333" stroke-width="1.6"/>
<path d="M607 298 L610.5 301.5 L607 305 M607 426 L610.5 429.5 L607 433 M607 442 L610.5 445.5 L607 449" fill="none" stroke="#888" stroke-width="1"/>
</svg>
<div class="a" style="left:599px;top:468px;width:276px;height:8px;overflow:hidden"><div style="position:absolute;left:0;top:-468px;width:900px;height:600px"><div class="t" style="left:24.5px;top:476.8px;font-size:12px;transform:scaleX(0.9)">Style</div><div class="t" style="left:127.6px;top:476.8px;font-size:12px;transform:scaleX(0.9)">(Not Assigned)</div></div></div>
<div class="a" style="left:598px;top:480px;width:294px;height:59px;border:1px solid #a8a8a8;background:#fff"></div>
<div class="a" style="left:599px;top:562px;width:82px;height:2px;background:#2b579a"></div>
<div class="a" style="left:680px;top:542px;width:1px;height:20px;background:#d0d0d0"></div><div class="a" style="left:599px;top:542px;width:1px;height:20px;background:#d0d0d0"></div>
<svg style="left:0;top:0" width="900" height="600">
<rect x="603.5" y="549.5" width="13" height="10.5" fill="#fff" stroke="#6e6e6e" stroke-width="1"/>
<path d="M605.5 552.5 H609 M610.5 552.5 H614.5 M605.5 554.5 H609 M610.5 554.5 H614.5 M605.5 556.5 H609 M610.5 556.5 H614.5" stroke="#8fb0d8" stroke-width="0.9"/>
<path d="M606 550 C607 547 609.5 545.2 612 545.2 L615.5 546 C615 548.5 613 550 610.5 550 L607.5 550.5Z" fill="#d9a63f"/>
<path d="M606 550.5 L609.5 548" stroke="#8a6a20" stroke-width="0.7"/>
<path d="M615.5 545 L617.5 545 L617.5 550 L615.8 549Z" fill="#3fae49"/>
<rect x="691.5" y="547" width="8" height="7" fill="#fff" stroke="#7a7a7a" stroke-width="1"/>
<rect x="691" y="546.5" width="9" height="3" fill="#4f86c6"/>
<rect x="686" y="550.5" width="8.5" height="7.5" fill="#fff" stroke="#7a7a7a" stroke-width="1"/>
<rect x="685.5" y="550" width="9.5" height="3" fill="#4f86c6"/>
<path d="M688 555.5 H689 M690.5 555.5 H691.5 M696.5 551.5 V552.5" stroke="#9a9a9a" stroke-width="0.8"/>
<rect x="767.5" y="545.5" width="15" height="15" fill="#fff" stroke="#777" stroke-width="1"/>
<path d="M770 548.5 H775" stroke="#3c78c0" stroke-width="1.3"/>
<path d="M772.5 549.5 V556.5 M773 551.5 H775 M773 555.5 H775" stroke="#3c78c0" stroke-width="0.9" stroke-dasharray="1 1"/>
<path d="M775.5 551.5 H779 M775.5 555.5 H779" stroke="#3c78c0" stroke-width="1.3"/>
</svg>
<svg style="left:0;top:0" width="900" height="600">
<path d="M562 355.2 H593.3 V345 L620.8 365 L593.3 384.8 V374.6 H562Z" fill="#f07480"/>
</svg>
<div class="a" style="left:1px;top:567px;width:898px;height:32px;background:#2b579a"></div>
<svg style="left:0;top:0" width="900" height="600">
<path d="M15 578 L20.5 583 L15 588Z" fill="#fff"/>
<rect x="124" y="574" width="1" height="19" fill="#8fa8cf"/>
<rect x="175" y="574" width="1" height="19" fill="#8fa8cf"/>
<rect x="525" y="571" width="1" height="25" fill="#8fa8cf"/>
<g fill="none" stroke="#fff" stroke-width="1.2">
<rect x="540.5" y="575.5" width="15" height="14"/>
<rect x="576.5" y="575.5" width="15" height="14"/>
<rect x="612.5" y="575.5" width="15" height="14"/>
<rect x="648.5" y="575.5" width="15" height="14"/>
</g>
<path d="M545.5 579.5 H551.5 M545.5 582.5 H551.5 M545.5 585.5 H551.5" stroke="#fff" stroke-width="1.2"/>
<path d="M541 582.5 L544 579.8 V585.2Z M555 582.5 L552 579.8 V585.2Z" fill="#fff"/>
<path d="M580 580.5 H588 M580 582.5 H588 M580 584.5 H588" stroke="#fff" stroke-width="0.8"/>
<path d="M584 576.5 L587 579 H581Z M584 588.5 L587 586 H581Z" fill="#fff"/>
<rect x="616.5" y="578.5" width="7" height="9" fill="none" stroke="#fff" stroke-width="1"/>
<path d="M618 580.5 H622 M618 582.5 H622 M618 584.5 H622" stroke="#fff" stroke-width="0.8"/>
<text x="651" y="585.5" font-size="7" font-weight="bold" fill="#fff" textLength="10.5" lengthAdjust="spacingAndGlyphs" font-family="Liberation Sans">100</text>
<rect x="741" y="582" width="8" height="2" fill="#fff"/>
<rect x="753" y="583" width="96" height="1" fill="#6e8fc0"/>
<rect x="802" y="579" width="1" height="8" fill="#6e8fc0"/>
<path d="M770.5 577.5 H777.5 V585 L774 588.5 L770.5 585Z" fill="#fff" stroke="#c8c8c8" stroke-width="0.5"/>
<rect x="853" y="582" width="8" height="2" fill="#fff"/>
<rect x="856" y="579" width="2" height="8" fill="#fff"/>
<g><rect x="891" y="585" width="2" height="2" fill="#b8b4a8"/><rect x="892" y="586" width="2" height="2" fill="#fff"/><rect x="887" y="589" width="2" height="2" fill="#b8b4a8"/><rect x="888" y="590" width="2" height="2" fill="#fff"/><rect x="891" y="589" width="2" height="2" fill="#b8b4a8"/><rect x="892" y="590" width="2" height="2" fill="#fff"/><rect x="883" y="593" width="2" height="2" fill="#b8b4a8"/><rect x="884" y="594" width="2" height="2" fill="#fff"/><rect x="887" y="593" width="2" height="2" fill="#b8b4a8"/><rect x="888" y="594" width="2" height="2" fill="#fff"/><rect x="891" y="593" width="2" height="2" fill="#b8b4a8"/><rect x="892" y="594" width="2" height="2" fill="#fff"/></g>
</svg>
<div class="t" style="left:358.40px;top:14.50px;font-size:13px;color:#fff;transform:scaleX(0.909);">WebsiteAnalytics.mrt - Designer</div>
<div class="t" style="left:27.50px;top:44.50px;font-size:13px;color:#fff;transform:scaleX(0.903);">File</div>
<div class="t" style="left:92.27px;top:43.50px;font-size:13px;color:#fff;transform:scaleX(1.031);">Home</div>
<div class="t" style="left:157.89px;top:43.50px;font-size:13px;color:#42479e;transform:scaleX(1.009);">Insert</div>
<div class="t" style="left:221.22px;top:43.50px;font-size:13px;color:#fff;transform:scaleX(0.978);">Page</div>
<div class="t" style="left:281.22px;top:43.50px;font-size:13px;color:#fff;transform:scaleX(0.984);">Layout</div>
<div class="t" style="left:350.66px;top:43.50px;font-size:13px;color:#fff;transform:scaleX(0.944);">Preview</div>
<div class="t" style="left:756.64px;top:43.50px;font-size:13px;color:#fff;transform:scaleX(0.960);">EN</div>
<div class="t" style="left:800.00px;top:43.50px;font-size:13px;color:#fff;transform:scaleX(0.972);">John Smith</div>
<div class="t" style="left:16.46px;top:105.87px;font-size:12.5px;color:#1a1a1a;transform:scaleX(0.843);">Page</div>
<div class="t" style="left:57.56px;top:105.87px;font-size:12.5px;color:#1a1a1a;transform:scaleX(0.839);">Dashboard</div>
<div class="t" style="left:133.80px;top:105.87px;font-size:12.5px;color:#1a1a1a;transform:scaleX(0.839);">Table</div>
<div class="t" style="left:175.60px;top:105.87px;font-size:12.5px;color:#1a1a1a;transform:scaleX(0.785);">Chart</div>
<div class="t" style="left:216.70px;top:105.87px;font-size:12.5px;color:#1a1a1a;transform:scaleX(0.849);">Gauge</div>
<div class="t" style="left:265.15px;top:105.87px;font-size:12.5px;color:#1a1a1a;transform:scaleX(0.849);">Pivot</div>
<div class="t" style="left:265.60px;top:118.07px;font-size:12.5px;color:#1a1a1a;transform:scaleX(0.872);">Table</div>
<div class="t" style="left:307.43px;top:105.87px;font-size:12.5px;color:#1a1a1a;transform:scaleX(0.868);">Indicator</div>
<div class="t" style="left:364.79px;top:105.87px;font-size:12.5px;color:#1a1a1a;transform:scaleX(0.808);">Progress</div>
<div class="t" style="left:423.04px;top:105.87px;font-size:12.5px;color:#1a1a1a;transform:scaleX(0.856);">Map</div>
<div class="t" style="left:462.57px;top:105.87px;font-size:12.5px;color:#1a1a1a;transform:scaleX(0.829);">Image</div>
<div class="t" style="left:511.00px;top:105.87px;font-size:12.5px;color:#1a1a1a;transform:scaleX(0.797);">Text</div>
<div class="t" style="left:548.44px;top:105.87px;font-size:12.5px;color:#1a1a1a;transform:scaleX(0.864);">Panel</div>
<div class="t" style="left:591.90px;top:105.87px;font-size:12.5px;color:#1a1a1a;transform:scaleX(0.843);">Shape</div>
<div class="t" style="left:639.28px;top:105.87px;font-size:12.5px;color:#1a1a1a;transform:scaleX(0.819);">Filter</div>
<div class="t" style="left:684.60px;top:105.87px;font-size:12.5px;color:#1a1a1a;transform:scaleX(0.847);">Setup</div>
<div class="t" style="left:681.20px;top:118.07px;font-size:12.5px;color:#1a1a1a;transform:scaleX(0.824);">Toolbox</div>
<div class="t" style="left:40.55px;top:141.57px;font-size:12.5px;color:#1a1a1a;transform:scaleX(0.853);">New Item</div>
<div class="t" style="left:395.60px;top:141.57px;font-size:12.5px;color:#1a1a1a;transform:scaleX(0.830);">Components</div>
<div class="t" style="left:319.60px;top:88.36px;font-size:10.5px;color:#6a6a6a;">100</div>
<div class="t" style="left:65.50px;top:171.50px;font-size:13px;font-weight:bold;color:#2b4f9a;transform:scaleX(0.906);">DashboardWebsiteAnalytics [Website Analytics]</div>
<div class="t" style="left:51.62px;top:383.32px;font-size:13.5px;color:#e6ecee;transform:scaleX(0.979);">Page / Sessions</div>
<div class="t" style="left:64.56px;top:422.41px;font-size:24.5px;color:#e6ecee;transform:scaleX(1.038);">2.07</div>
<div class="t" style="left:601.17px;top:166.67px;font-size:12.5px;color:#1a1a1a;transform:scaleX(0.829);">Properties</div>
<div class="t" style="left:624.00px;top:237.24px;font-size:12px;font-weight:bold;color:#000;transform:scaleX(0.963);">Misc</div>
<div class="t" style="left:624.30px;top:253.14px;font-size:12px;color:#000;transform:scaleX(0.806);">(Alias)</div>
<div class="t" style="left:624.30px;top:269.14px;font-size:12px;color:#000;transform:scaleX(0.835);">(Name)</div>
<div class="t" style="left:624.30px;top:285.14px;font-size:12px;color:#000;transform:scaleX(0.871);">Back Color</div>
<div class="t" style="left:624.30px;top:301.14px;font-size:12px;color:#000;transform:scaleX(0.852);">Border</div>
<div class="t" style="left:624.30px;top:317.14px;font-size:12px;color:#000;transform:scaleX(0.847);">Conditions</div>
<div class="t" style="left:624.30px;top:333.14px;font-size:12px;color:#000;transform:scaleX(0.908);">Data Transfomation</div>
<div class="t" style="left:624.30px;top:349.14px;font-size:12px;color:#000;transform:scaleX(0.862);">Enabled</div>
<div class="t" style="left:624.30px;top:365.14px;font-size:12px;color:#fff;transform:scaleX(0.823);">Group</div>
<div class="t" style="left:623.41px;top:381.14px;font-size:12px;color:#000;transform:scaleX(0.892);">Interaction</div>
<div class="t" style="left:624.30px;top:397.14px;font-size:12px;color:#000;transform:scaleX(0.891);">Linked</div>
<div class="t" style="left:624.30px;top:413.14px;font-size:12px;color:#000;transform:scaleX(0.921);">Locked</div>
<div class="t" style="left:624.30px;top:429.14px;font-size:12px;color:#000;transform:scaleX(0.858);">Margin</div>
<div class="t" style="left:624.30px;top:445.14px;font-size:12px;color:#000;transform:scaleX(0.869);">Padding</div>
<div class="t" style="left:624.30px;top:461.14px;font-size:12px;color:#000;transform:scaleX(0.860);">Restrictions</div>
<div class="t" style="left:726.60px;top:285.14px;font-size:12px;color:#000;transform:scaleX(0.818);">From Style</div>
<div class="t" style="left:726.60px;top:317.14px;font-size:12px;color:#000;transform:scaleX(0.876);">(Not Specified)</div>
<div class="t" style="left:726.60px;top:349.14px;font-size:12px;color:#000;transform:scaleX(0.835);">True</div>
<div class="t" style="left:726.60px;top:397.14px;font-size:12px;color:#000;transform:scaleX(0.799);">False</div>
<div class="t" style="left:726.60px;top:413.14px;font-size:12px;color:#000;transform:scaleX(0.799);">False</div>
<div class="t" style="left:726.60px;top:429.14px;font-size:12px;color:#000;transform:scaleX(0.875);">3,3,3,3</div>
<div class="t" style="left:726.60px;top:445.14px;font-size:12px;color:#000;transform:scaleX(0.875);">5,5,5,5</div>
<div class="t" style="left:726.60px;top:461.14px;font-size:12px;color:#000;transform:scaleX(0.797);">All</div>
<div class="t" style="left:726.80px;top:365.14px;font-size:12px;font-weight:bold;color:#000;transform:scaleX(0.944);">MyGroup2</div>
<div class="t" style="left:604.30px;top:490.34px;font-size:12px;font-weight:bold;color:#000;transform:scaleX(0.945);">Group</div>
<div class="t" style="left:626.00px;top:552.84px;font-size:12px;color:#2b579a;transform:scaleX(0.841);">Properties</div>
<div class="t" style="left:708.00px;top:552.84px;font-size:12px;color:#1a1a1a;transform:scaleX(0.881);">Dictionary</div>
<div class="t" style="left:790.00px;top:552.84px;font-size:12px;color:#1a1a1a;transform:scaleX(0.876);">Report Tree</div>
<div class="t" style="left:32.00px;top:583.50px;font-size:13px;color:#fff;transform:scaleX(0.863);">Check for Issues</div>
<div class="t" style="left:133.00px;top:583.50px;font-size:13px;color:#fff;transform:scaleX(0.877);">Chart2</div>
<div class="t" style="left:180.00px;top:583.50px;font-size:13px;color:#fff;transform:scaleX(0.830);">X:0.00</div>
<div class="t" style="left:217.00px;top:583.50px;font-size:13px;color:#fff;transform:scaleX(0.842);">Y:400.00</div>
<div class="t" style="left:266.70px;top:583.50px;font-size:13px;color:#fff;transform:scaleX(0.880);">Width:520.00</div>
<div class="t" style="left:339.10px;top:583.50px;font-size:13px;color:#fff;transform:scaleX(0.899);">Height:200.00</div>
<div class="t" style="left:693.00px;top:583.50px;font-size:13px;color:#fff;transform:scaleX(0.831);">41%</div>
</body></html>
